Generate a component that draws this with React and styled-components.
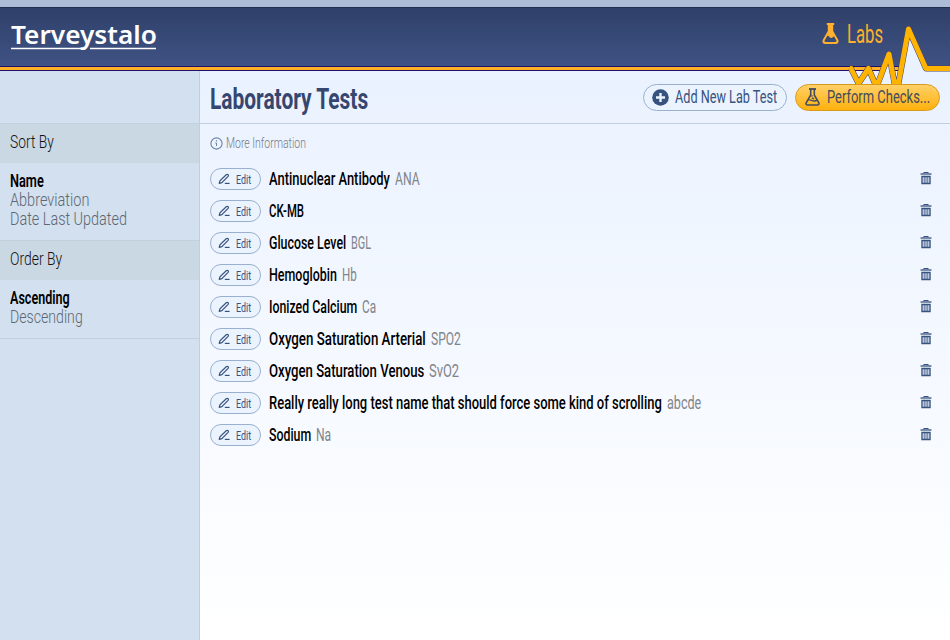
import React, { useLayoutEffect, useRef } from "react";
import styled, { createGlobalStyle } from "styled-components";

const Global = createGlobalStyle`
  * { box-sizing: border-box; }
  body { margin: 0; overflow: hidden; font-family: Roboto, sans-serif; }
`;

const Page = styled.div`
  width: 950px;
  height: 640px;
  display: flex;
  flex-direction: column;
  background: #adbcd6;
  padding-top: 7px;
`;

const FitBox = styled.span`
  display: block;
  flex: none;
  width: ${(p) => p.$width}px;
  white-space: nowrap;
`;
const FitInner = styled.span`
  display: inline-block;
  transform-origin: 0 50%;
`;

/* Condenses a run of text so that it fills the given width. */
function Fit({ width, children }) {
  const ref = useRef(null);
  useLayoutEffect(() => {
    const el = ref.current;
    el.style.transform = `scaleX(${width / el.offsetWidth})`;
  }, [width, children]);
  return (
    <FitBox $width={width}>
      <FitInner ref={ref}>{children}</FitInner>
    </FitBox>
  );
}

const Header = styled.header`
  position: relative;
  height: 64px;
  flex: none;
  display: flex;
  justify-content: space-between;
  align-items: flex-start;
  padding: 0 67px 0 11px;
  background: linear-gradient(#2f4069, #405486);
  border-top: 1px solid #202f50;
`;
const Rule = styled.div`
  position: absolute;
  left: 0;
  right: 0;
  bottom: 0;
  height: 5px;
  background: #ffb026;
  border: 1px solid #20106a;
  border-width: 1px 0;
`;
const Logo = styled.div`
  padding-top: 9px;
  color: #fff;
  font: 600 25.5px/34px "Noto Sans", sans-serif;
`;
const LogoLine = styled.svg`
  display: block;
  margin-top: -4px;
`;
const Section = styled.div`
  display: flex;
  gap: 8px;
  padding-top: 11px;
  color: #ffb02e;
  font-size: 25px;
  line-height: 32px;
`;
const FlaskSlot = styled.div`
  padding-top: 4px;
  line-height: 0;
`;
const Pulse = styled.svg`
  position: absolute;
  left: 845px;
  top: 16px;
`;

const Body = styled.div`
  flex: 1;
  display: flex;
  min-height: 0;
`;
const Sidebar = styled.aside`
  width: 200px;
  flex: none;
  padding-top: 52px;
  background: #d3e0ef;
  border-right: 1px solid #c1cedf;
`;
const GroupTitle = styled.div`
  height: 40px;
  padding: 3px 10px 0;
  border-top: 1px solid #c1d0df;
  background: #cad8e4;
  color: #111;
  font-size: 18.5px;
  font-weight: 300;
  line-height: 30px;
`;
const Group = styled.div`
  height: ${(p) => p.$height}px;
  padding: 9px 10px 0;
  border-bottom: ${(p) => (p.$last ? "1px solid #c1d0df" : "0")};
`;
const Option = styled.div`
  height: 19px;
  line-height: 18px;
  font-size: 18px;
  font-weight: ${(p) => (p.$active ? 600 : 300)};
  color: ${(p) => (p.$active ? "#000" : "#5d6771")};
`;

const Main = styled.main`
  flex: 1;
  background: linear-gradient(#eaf2ff, #fff);
`;
const TitleBar = styled.div`
  height: 53px;
  display: flex;
  align-items: center;
  gap: 8px;
  padding: 0 10px;
  border-bottom: 1px solid #c1cfe2;
`;
const Title = styled.h1`
  margin: 3px auto 0 0;
  font-size: 29px;
  line-height: 36px;
  font-weight: 700;
  color: #35466f;
`;
const Button = styled.button`
  position: relative;
  height: 27px;
  width: ${(p) => p.$width}px;
  display: flex;
  align-items: center;
  gap: ${(p) => (p.$gold ? 7 : 6)}px;
  padding: 0 0 0 ${(p) => (p.$gold ? 9 : 8)}px;
  border-radius: 14px;
  border: 1px solid ${(p) => (p.$gold ? "#d99a1c" : "#9ab0cf")};
  background: ${(p) => (p.$gold ? "linear-gradient(#ffd067, #ffb10d)" : "#eaf3fe")};
  color: ${(p) => (p.$gold ? "#434c5c" : "#37527f")};
  font: 400 18.5px/25px Roboto, sans-serif;
`;
const Info = styled.div`
  height: 39px;
  display: flex;
  align-items: center;
  gap: 3px;
  padding: 0 10px 1px;
  color: #747b87;
  font-size: 14px;
  font-weight: 300;
`;
const Row = styled.div`
  height: 32px;
  display: flex;
  align-items: center;
  padding: 0 18px 0 10px;
  font-size: 18.5px;
  line-height: 26px;
`;
const Edit = styled.button`
  width: 51px;
  height: 22px;
  display: flex;
  align-items: center;
  gap: 5px;
  padding: 1px 0 0 7px;
  margin-right: 8px;
  border: 1px solid #9ab0cf;
  border-radius: 11px;
  background: #eaf3fe;
  color: #37527f;
  font: 400 12.5px/18px Roboto, sans-serif;
`;
const Name = styled.div`
  margin-right: 5px;
  font-weight: 500;
  color: #000;
`;
const Abbr = styled.div`
  margin-right: auto;
  color: #80848a;
`;

const Flask = () => (
  <svg width="17" height="21" viewBox="0 0 17 21" fill="currentColor">
    <path fillRule="evenodd" d="M4.800 0h7.400v2h-1v6l5 8.800c1 2-.1 4.200-2.300 4.200H3.100C.9 21-.2 18.800.8 16.800L5.800 8V2h-1zM5.500 12.400L2.800 17.200c-.6 1.100-.1 1.800.9 1.800h9.600c1 0 1.500-.7.9-1.800l-2-3.700c-1.200 0-1.600 1.500-3.200 1.400-1.600-.2-1.800-2.200-3.500-2.500z" />
  </svg>
);
const CheckFlask = () => (
  <svg width="15" height="18" viewBox="0 0 15 18" fill="none" stroke="currentColor">
    <path d="M4 1h7" strokeWidth="1.800" />
    <path d="M5.700 1v6L1.300 14.500c-.7 1.500 0 2.500 1.300 2.500h9.800c1.300 0 2-1 1.300-2.500L9.300 7V1" strokeWidth="1.600" />
    <path d="M3.200 12.200c2-1.200 3.800.8 5.800.8 1.500 0 2-.8 3-.4" strokeWidth="1.500" />
    <path d="M6.300 8h1.200M7 9.800l2 1" strokeWidth="1.500" />
  </svg>
);
const Plus = () => (
  <svg width="17" height="17" viewBox="0 0 17 17">
    <circle cx="8.500" cy="8.500" r="8.300" fill="#37527f" />
    <path d="M8.500 4v9M4 8.500h9" stroke="#eaf3fe" strokeWidth="2.400" />
  </svg>
);
const Pen = () => (
  <svg width="13" height="13" viewBox="0 0 13 13" fill="none" stroke="#37527f" strokeWidth="1.200" strokeLinejoin="round">
    <path d="M1.200 10.300l.7-2.400L8.200 1.700c1.500-1.100 2.900.3 1.900 1.700L3.900 9.600z" />
    <path d="M6.800 10.400h4.800" />
  </svg>
);
const InfoIcon = () => (
  <svg width="13" height="13" viewBox="0 0 13 13" fill="none" stroke="#6c80a8">
    <circle cx="6.500" cy="6.500" r="5.600" strokeWidth="1.100" />
    <path d="M5.300 6h1.200v3" />
    <path d="M6.500 3.300v1.200" strokeWidth="1.200" />
  </svg>
);
const TrashIcon = styled.svg`
  margin-top: -2px;
`;
const Trash = () => (
  <TrashIcon width="12" height="14" viewBox="0 0 12 14" fill="none" stroke="#37527f">
    <path d="M3.800 2.500v-1h4.400v1" />
    <path d="M.5 3h11" strokeWidth="1.300" />
    <path d="M2 5.500v7h8v-7z" strokeWidth="1.400" />
    <path d="M4.200 6v6M6 6v6M7.800 6v6" strokeWidth=".9" />
  </TrashIcon>
);

const pulseLine =
  "M850 68.500H851L858.500 83.500L868.500 68.500L876.500 87L889 54L896.500 94L908.500 29L926 68.500H950";

const tests = [
  ["Antinuclear Antibody", 121, "ANA", 25],
  ["CK-MB", 35],
  ["Glucose Level", 77, "BGL", 20],
  ["Hemoglobin", 68, "Hb", 15],
  ["Ionized Calcium", 88, "Ca", 14],
  ["Oxygen Saturation Arterial", 157, "SPO2", 30],
  ["Oxygen Saturation Venous", 155, "SvO2", 30],
  ["Really really long test name that should force some kind of scrolling", 393, "abcde", 34],
  ["Sodium", 42, "Na", 15],
];

export default function App() {
  return (
    <Page>
      <Global />
      <Header>
        <Logo>
          <Fit width={146}>Terveystalo</Fit>
          <LogoLine width="146" height="3">
            <path d="M0 1.500h70M79 1.500h66" stroke="#fff" strokeWidth="1.300" />
          </LogoLine>
        </Logo>
        <Section>
          <FlaskSlot><Flask /></FlaskSlot>
          <Fit width={36}>Labs</Fit>
        </Section>
        <Rule />
        <Pulse width="105" height="68" viewBox="845 24 105 68">
          <path d="M849 71H851L858.500 84L868.500 68.500L876.500 84L889 54L896.500 84L908.500 29L926 68.500H950V92H849Z" fill="#eaf2ff" />
          <path d={pulseLine} fill="none" stroke="#4b3f66" strokeWidth="6" strokeLinejoin="round" />
          <path d={pulseLine} fill="none" stroke="#ffb400" strokeWidth="5" strokeLinejoin="round" />
        </Pulse>
      </Header>
      <Body>
        <Sidebar>
          <GroupTitle><Fit width={44}>Sort By</Fit></GroupTitle>
          <Group $height={77}>
            <Option $active><Fit width={34}>Name</Fit></Option>
            <Option><Fit width={79}>Abbreviation</Fit></Option>
            <Option><Fit width={117}>Date Last Updated</Fit></Option>
          </Group>
          <GroupTitle><Fit width={52}>Order By</Fit></GroupTitle>
          <Group $height={59} $last>
            <Option $active><Fit width={60}>Ascending</Fit></Option>
            <Option><Fit width={73}>Descending</Fit></Option>
          </Group>
        </Sidebar>
        <Main>
          <TitleBar>
            <Title><Fit width={158}>Laboratory Tests</Fit></Title>
            <Button $width={144}><Plus /><Fit width={102}>Add New Lab Test</Fit></Button>
            <Button $width={145} $gold><CheckFlask /><Fit width={103}>Perform Checks...</Fit></Button>
          </TitleBar>
          <Info><InfoIcon /><Fit width={80}>More Information</Fit></Info>
          {tests.map(([name, w, abbr, aw]) => (
            <Row key={name}>
              <Edit><Pen /><Fit width={15}>Edit</Fit></Edit>
              <Name><Fit width={w}>{name}</Fit></Name>
              <Abbr>{abbr && <Fit width={aw}>{abbr}</Fit>}</Abbr>
              <Trash />
            </Row>
          ))}
        </Main>
      </Body>
    </Page>
  );
}
